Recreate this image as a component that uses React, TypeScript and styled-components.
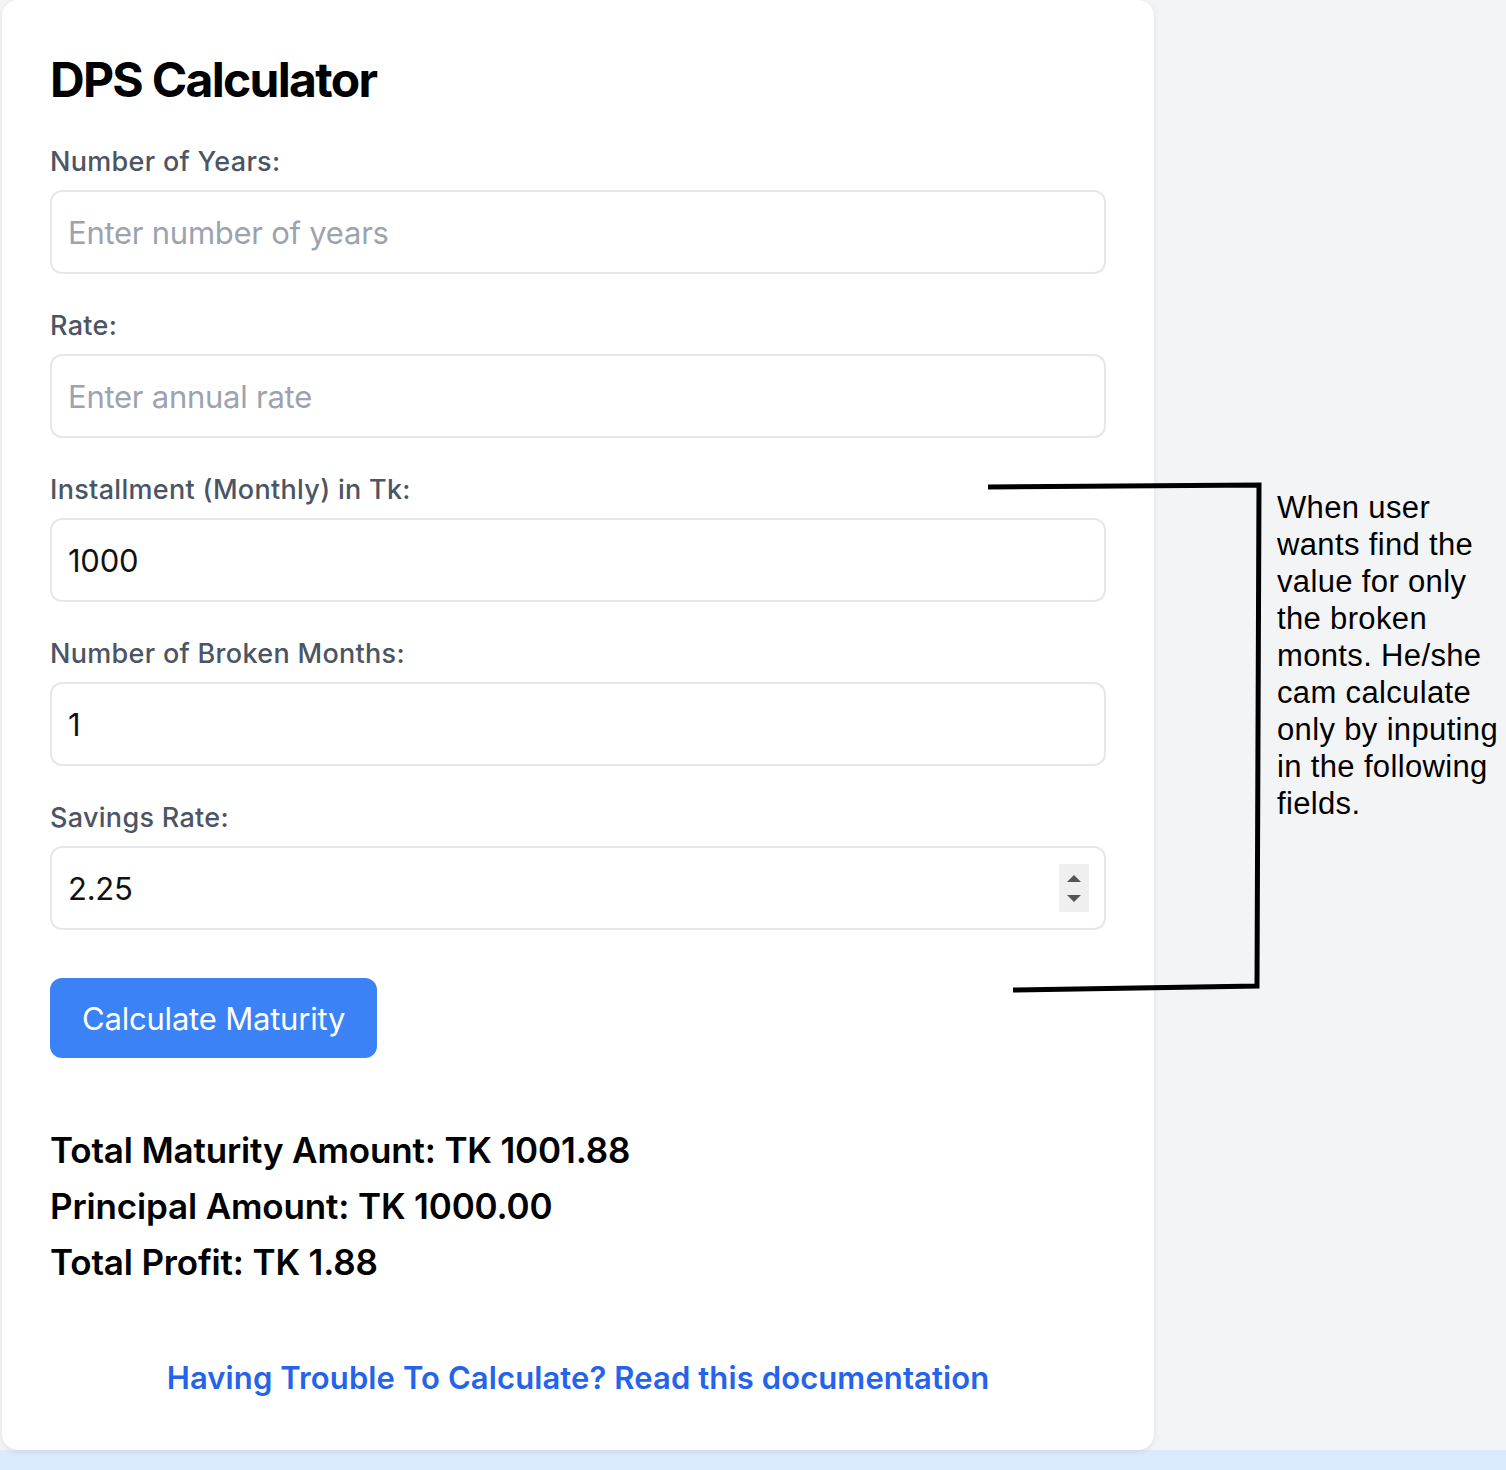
import React from "react";
import styled, { createGlobalStyle } from "styled-components";

const GlobalStyle = createGlobalStyle`
  html, body {
    margin: 0;
    padding: 0;
    background: #dbeafe;
  }
  * {
    box-sizing: border-box;
  }
`;

const PageEl = styled.div`
  display: flex;
  flex-direction: column;
  min-height: 1470px;
  font-family: Inter, "Noto Sans", sans-serif;
`;

const MainEl = styled.div`
  position: relative;
  display: flex;
  height: 1450px;
  background-color: #f3f4f6;
`;

const FooterStripEl = styled.div`
  flex: 1;
  background-color: #dbeafe;
`;

const CardEl = styled.div`
  margin-left: 2px;
  width: 1152px;
  display: flex;
  flex-direction: column;
  background-color: #ffffff;
  border-radius: 16px;
  padding: 48px 48px 46px 48px;
  box-shadow: 0 2px 6px rgba(0, 0, 0, 0.08);
`;

const TitleEl = styled.h1`
  margin: 0 0 30px 0;
  font-size: 48px;
  line-height: 64px;
  font-weight: 700;
  letter-spacing: -1.7px;
  color: #000000;
`;

const FieldEl = styled.div`
  display: flex;
  flex-direction: column;
  margin-bottom: 32px;
`;

const LabelEl = styled.label`
  font-size: 27px;
  line-height: 40px;
  font-weight: 500;
  color: #4b5563;
  margin-bottom: 8px;
  letter-spacing: 0.3px;
`;

const InputWrapEl = styled.div`
  position: relative;
`;

const InputEl = styled.input`
  display: block;
  width: 100%;
  height: 84px;
  padding: 0 16px;
  border: 2px solid #e5e7eb;
  border-radius: 12px;
  font-family: Inter, "Noto Sans", sans-serif;
  font-size: 31px;
  letter-spacing: -0.25px;
  color: #111111;
  background: #ffffff;
  outline: none;

  &::placeholder {
    color: #9ca3af;
  }
`;

const SpinnerEl = styled.div`
  position: absolute;
  right: 17px;
  top: 18px;
  width: 30px;
  height: 48px;
  background-color: #efefef;
  display: flex;
  flex-direction: column;
  align-items: center;
  justify-content: center;
  gap: 13px;
`;

const ArrowEl = styled.span<{ $down?: boolean }>`
  width: 0;
  height: 0;
  border-left: 7px solid transparent;
  border-right: 7px solid transparent;
  ${(p) =>
    p.$down
      ? "border-top: 7px solid #555555;"
      : "border-bottom: 7px solid #555555;"}
`;

const ButtonEl = styled.button`
  align-self: flex-start;
  margin-top: 16px;
  height: 80px;
  padding: 0 32px;
  border: none;
  border-radius: 12px;
  background-color: #3b82f6;
  color: #ffffff;
  font-family: Inter, "Noto Sans", sans-serif;
  font-size: 31px;
  letter-spacing: -0.2px;
  cursor: pointer;
`;

const ResultsEl = styled.div`
  margin-top: 64px;
  display: flex;
  flex-direction: column;
`;

const ResultLineEl = styled.p`
  margin: 0;
  font-size: 35px;
  line-height: 56px;
  font-weight: 600;
  letter-spacing: -0.15px;
  color: #000000;
`;

const DocLinkEl = styled.a`
  margin-top: 64px;
  align-self: center;
  font-size: 31px;
  line-height: 48px;
  font-weight: 600;
  letter-spacing: 0.1px;
  color: #2563eb;
  text-decoration: none;
`;

const AsideEl = styled.aside`
  padding: 489px 0 0 123px;
  width: 352px;
`;

const NoteEl = styled.p`
  margin: 0;
  font-family: "Liberation Sans", Arial, sans-serif;
  font-size: 31px;
  line-height: 37px;
  letter-spacing: 0.35px;
  color: #000000;
  width: 232px;
`;

const BracketEl = styled.svg`
  position: absolute;
  left: 0;
  top: 0;
  pointer-events: none;
`;

type Field = {
  label: string;
  placeholder?: string;
  value?: string;
  spinner?: boolean;
};

const fields: Field[] = [
  { label: "Number of Years:", placeholder: "Enter number of years" },
  { label: "Rate:", placeholder: "Enter annual rate" },
  { label: "Installment (Monthly) in Tk:", value: "1000" },
  { label: "Number of Broken Months:", value: "1" },
  { label: "Savings Rate:", value: "2.25", spinner: true },
];

function App() {
  return (
    <PageEl>
      <GlobalStyle />
      <MainEl>
        <CardEl>
          <TitleEl>DPS Calculator</TitleEl>
          {fields.map((f) => (
            <FieldEl key={f.label}>
              <LabelEl>{f.label}</LabelEl>
              <InputWrapEl>
                <InputEl
                  type="text"
                  placeholder={f.placeholder}
                  defaultValue={f.value}
                  readOnly
                />
                {f.spinner && (
                  <SpinnerEl>
                    <ArrowEl />
                    <ArrowEl $down />
                  </SpinnerEl>
                )}
              </InputWrapEl>
            </FieldEl>
          ))}
          <ButtonEl>Calculate Maturity</ButtonEl>
          <ResultsEl>
            <ResultLineEl>Total Maturity Amount: TK 1001.88</ResultLineEl>
            <ResultLineEl>Principal Amount: TK 1000.00</ResultLineEl>
            <ResultLineEl>Total Profit: TK 1.88</ResultLineEl>
          </ResultsEl>
          <DocLinkEl href="#">
            Having Trouble To Calculate? Read this documentation
          </DocLinkEl>
        </CardEl>
        <AsideEl>
          <NoteEl>
            When user wants find the value for only the broken monts. He/she
            cam calculate only by inputing in the following fields.
          </NoteEl>
        </AsideEl>
        {/* hand drawn bracket over the broken-month fields */}
        <BracketEl width="1506" height="1450" viewBox="0 0 1506 1450">
          <path
            d="M988 487 L1259 485 L1257 986 L1013 990"
            fill="none"
            stroke="#000000"
            strokeWidth="5"
            strokeLinejoin="miter"
          />
        </BracketEl>
      </MainEl>
      <FooterStripEl />
    </PageEl>
  );
}

export default App;
